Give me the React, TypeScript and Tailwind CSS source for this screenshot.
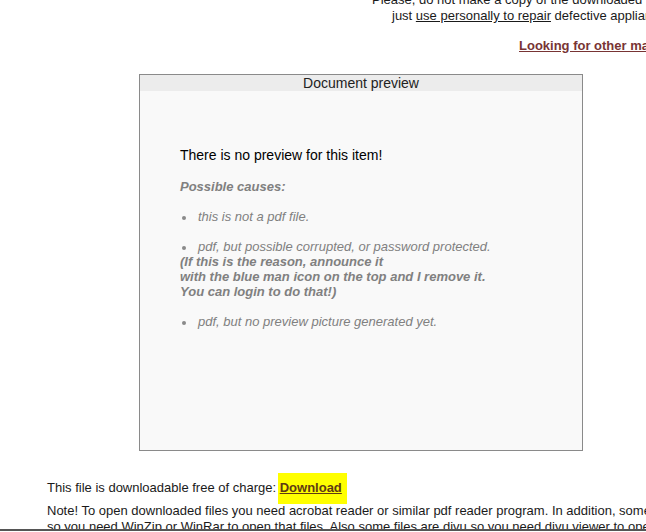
const causes = [
  "this is not a pdf file.",
  "pdf, but possible corrupted, or password protected.",
  "pdf, but no preview picture generated yet.",
];

const Bullet = ({ children }: { children: React.ReactNode }) => (
  <span>
    <span className="inline-block w-[4px] h-[4px] rounded-full bg-[#8a8a8a] align-middle ml-[2px] mr-[12px]" />
    {children}
  </span>
);

export default function App() {
  return (
    <div
      className="w-[646px] h-[532px] bg-white text-[13px] text-[#1a1a1a] overflow-hidden flex flex-col"
      style={{ fontFamily: '"Liberation Sans", Arial, sans-serif' }}
    >
      <div className="h-[529px] overflow-hidden whitespace-nowrap">
        {/* top notice, cut by the window */}
        <div className="-mt-[8px] leading-[16px]">
          <div className="pl-[372px]">Please, do not make a copy of the downloaded manuals, it is not allowed,</div>
          <div className="pl-[392px]">
            just <span className="underline">use personally to repair</span> defective appliances.
          </div>
        </div>
        <div className="mt-[14px] leading-[16px] pl-[519px]">
          <span className="font-bold underline text-[#783434]">Looking for other manuals?</span>
        </div>

        {/* preview box */}
        <div className="mt-[20px] ml-[139px] w-[444px] h-[377px] border border-[#8a8a8a] bg-[#f9f9f9] flex flex-col">
          <div className="h-[16px] bg-[#ececec] text-center text-[14px] leading-[16px] text-[#222]">Document preview</div>
          <div className="pt-[56px] pl-[40px]">
            <div className="text-[14px] leading-[16px] text-black">There is no preview for this item!</div>
            <div className="mt-[16px] leading-[15px] text-[#808080] italic">
              <div className="font-bold">Possible causes:</div>
              <div className="mt-[15px]">
                <Bullet>{causes[0]}</Bullet>
              </div>
              <div className="mt-[15px]">
                <Bullet>{causes[1]}</Bullet>
                <div className="font-bold">(If this is the reason, announce it</div>
                <div className="font-bold">with the blue man icon on the top and I remove it.</div>
                <div className="font-bold">You can login to do that!)</div>
              </div>
              <div className="mt-[15px]">
                <Bullet>{causes[2]}</Bullet>
              </div>
            </div>
          </div>
        </div>

        {/* download line */}
        <div className="mt-[29px] pl-[47px] leading-[16px]">
          This file is downloadable free of charge:{" "}
          <span className="bg-[#ffff00] -ml-[2px] pl-[2px] pr-[5px] pt-[7px] pb-[9px]">
            <span className="font-bold underline text-[#5e3a14]">Download</span>
          </span>
        </div>
        <div className="mt-[7px] pl-[47px] leading-[16px]">
          <div>
            Note! To open downloaded files you need acrobat reader or similar pdf reader program. In addition, some files are archived,
          </div>
          <div>
            so you need WinZip or WinRar to open that files. Also some files are djvu so you need djvu viewer to open them.
          </div>
        </div>
      </div>
      <div className="h-[2px] bg-[#555]" />
    </div>
  );
}
